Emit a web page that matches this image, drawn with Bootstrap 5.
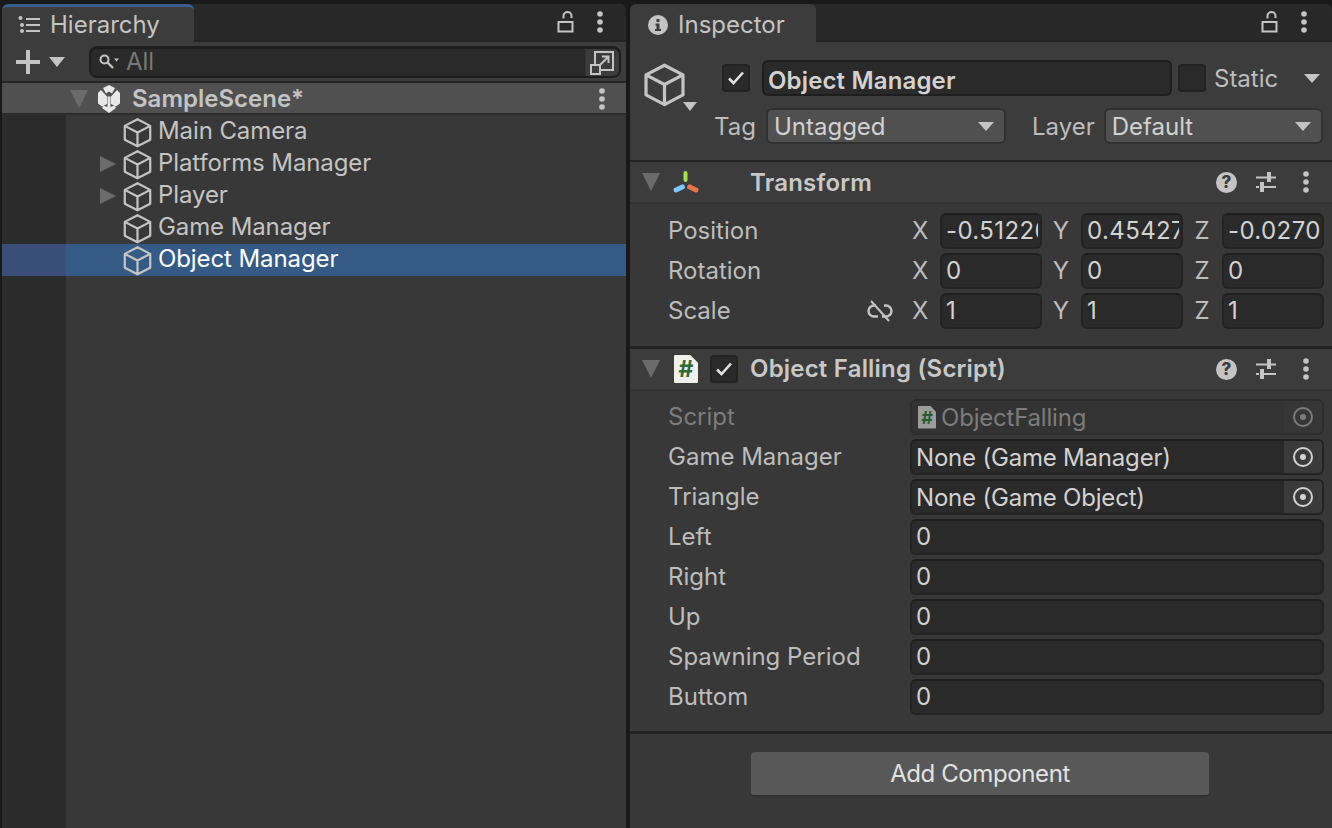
<!DOCTYPE html>
<html lang="en">
<head>
<meta charset="UTF-8">
<title>Unity Editor</title>
<link href="https://cdn.jsdelivr.net/npm/bootstrap@5.3.3/dist/css/bootstrap.min.css" rel="stylesheet">
<style>
    html, body { height: 100%; }
    body { margin: 0; background: #191919; color: #c4c4c4; font-family: Inter, "Liberation Sans", sans-serif; font-size: 24px; line-height: 32px; overflow: hidden; }
    svg { display: block; flex: none; }
    .ed-root { height: 828px; padding-top: 4px; gap: 4px; }
    .ed-panel { background: #383838; display: flex; flex-direction: column; overflow: hidden; border-radius: 6px 6px 0 0; }
    .ed-left { width: 624px; margin-left: 2px; }
    .ed-right { width: 702px; }
    .ed-tabs { height: 38px; background: #282828; border-bottom: 2px solid #232323; flex: none; }
    .ed-tab { height: 38px; background: #3c3c3c; color: #c4c4c4; margin-bottom: -2px; border-radius: 6px 6px 0 0; }
    .ed-tab-h { width: 192px; border-top: 3px solid #3a5f8f; padding-left: 16px; gap: 9px; }
    .ed-tab-i { width: 186px; padding: 3px 0 0 18px; gap: 10px; }
    .ed-tabtools { gap: 21px; padding-right: 22px; }
    .ed-toolbar { height: 41px; background: #3c3c3c; flex: none; padding-left: 14px; border-bottom: 2px solid #232323; }
    .ed-search { width: 532px; height: 32px; margin-left: 24px; background: #2a2a2a; border: 2px solid #1e1e1e; border-top-width: 3px; border-radius: 8px; color: #787878; }
    .ed-search-l { padding-left: 8px; gap: 7px; }
    .ed-search-btn { width: 34px; height: 100%; background: #3c3c3c; border-left: 1px solid #333; border-radius: 0 6px 6px 0; }
    .ed-scene { height: 32px; background: #505050; border-bottom: 2px solid #2c2c2c; flex: none; font-weight: 600; padding: 2px 20px 0 68px; }
    .ed-scene-name { flex: 1; }
    .ed-tree { flex: 1; background: linear-gradient(to right, #2b2b2b 64px, #383838 64px); padding-top: 1px; }
    .ed-row { height: 32px; padding-left: 56px; position: relative; }
    .ed-spacer { width: 64px; flex: none; }
    .ed-sel { background: linear-gradient(to right, #3a4f78 64px, #355a86 64px); color: #fff; }
    .ed-fold { position: absolute; left: 98px; top: 8px; width: 0; height: 0; border-left: 16px solid #6b6b6b; border-top: 8px solid transparent; border-bottom: 8px solid transparent; }
    .ed-rowname { margin: 0 0 2px 5px; letter-spacing: -.1px; }
    .ed-down { width: 0; height: 0; border-left: 8px solid transparent; border-right: 8px solid transparent; border-top: 9px solid #c4c4c4; flex: none; }
    .ed-down-g { border-left-width: 9px; border-right-width: 9px; border-top: 18px solid #6b6b6b; }
    .ed-head { height: 120px; background: #3c3c3c; border-bottom: 2px solid #232323; flex: none; position: relative; }
    .ed-check { width: 28px; height: 28px; background: #2a2a2a; border: 2px solid #222; border-radius: 4px; flex: none; }
    .ed-name { width: 410px; height: 36px; background: #2a2a2a; border: 2px solid #1e1e1e; border-radius: 6px; padding-left: 4px; font-weight: 600; color: #d2d2d2; margin-left: 12px; line-height: 37px; letter-spacing: .15px; }
    .ed-headtop { padding: 18px 0 0 92px; }
    .ed-select { height: 36px; background: #505050; border: 2px solid #303030; border-radius: 6px; padding: 0 10px 0 6px; color: #d2d2d2; }
    .ed-tagrow { padding-top: 12px; padding-left: 84px; }
    .ed-nudge { padding-top: 2px; }
    .ed-comp-h { height: 42px; background: #3c3c3c; border-bottom: 2px solid #333; flex: none; font-weight: 600; color: #c8c8c8; padding-left: 12px; padding-right: 22px; }
    .ed-comp-title { letter-spacing: .2px; }
    .ed-comp-tools { gap: 18px; margin-left: auto; }
    .ed-help { width: 21px; height: 21px; border-radius: 50%; background: #c4c4c4; color: #3c3c3c; font-size: 17px; font-weight: 800; line-height: 21px; text-align: center; flex: none; }
    .ed-kebab-r { margin-left: 7px; }
    .ed-sep { height: 3px; background: #232323; flex: none; }
    .ed-sep-a { margin-top: 15px; }
    .ed-sep-b { margin-top: 14px; }
    .ed-props { padding: 7px 8px 0 38px; }
    .ed-props-s { padding-top: 6px; }
    .ed-prop { height: 40px; }
    .ed-lab { width: 242px; flex: none; color: #bdbdbd; position: relative; }
    .ed-dim { color: #7c7c7c; }
    .ed-axis { width: 30px; flex: none; color: #bdbdbd; padding-left: 2px; }
    .ed-axis-n { width: 39px; text-align: center; padding: 0 1px 0 0; }
    .ed-field { height: 36px; background: #2a2a2a; border: 2px solid #232323; border-top-color: #1e1e1e; border-radius: 6px; padding: 0 0 0 4px; line-height: 31px; color: #d2d2d2; overflow: hidden; }
    .ed-num { width: 102px; flex: none; }
    .ed-num > span { display: block; width: 92px; overflow: hidden; white-space: nowrap; letter-spacing: .4px; }
    .ed-wide { width: 414px; flex: none; }
    .ed-tight { letter-spacing: -.2px; }
    .ed-picker { width: 38px; height: 100%; background: #3a3a3a; }
    .ed-ro { background: #333; color: #7c7c7c; border-color: #2c2c2c; }
    .ed-ro .ed-picker { background: #363636; }
    .ed-unlink { position: absolute; right: 17px; top: 5px; }
    .ed-btnbar { padding-top: 18px; }
    .ed-addbtn { width: 458px; height: 45px; background: #585858; border: 0; border-bottom: 2px solid #2f2f2f; border-radius: 4px; color: #e2e2e2; padding: 0; margin-left: 121px; font-size: 24px; letter-spacing: -.4px; }
    .ed-script-ico { width: 24px; height: 28px; background: #f0f0ec; color: #2f6b32; font-weight: 700; line-height: 28px; text-align: center; clip-path: polygon(0 0,68% 0,100% 28%,100% 100%,0 100%); font-size: 23px; flex: none; border-radius: 1px; }
    .ed-script-sm { width: 18px; height: 23px; background: #9c9c9c; color: #2b5a2e; font-size: 18px; line-height: 23px; margin: 0 5px 0 2px; }
</style>
</head>
<body>
<svg width="0" height="0" style="position:absolute">
    <symbol id="cube" viewBox="0 0 28 28"><path d="M14 2 25.500 8v12.500L14 26.500 2.500 20.500V8Z M2.500 8 14 14l11.500-6 M14 14v12.500" fill="none" stroke="currentColor" stroke-width="2" stroke-linejoin="round"/></symbol>
    <symbol id="kebab" viewBox="0 0 8 22"><circle cx="4" cy="3" r="2.800" fill="currentColor"/><circle cx="4" cy="11" r="2.800" fill="currentColor"/><circle cx="4" cy="19" r="2.800" fill="currentColor"/></symbol>
    <symbol id="lock" viewBox="0 0 18 22"><path d="M1.500 11h14v9.500h-14Z M6.500 7.500V5a4 4 0 0 1 8 0v2" fill="none" stroke="currentColor" stroke-width="2"/></symbol>
    <symbol id="sliders" viewBox="0 0 22 22"><path d="M1 6.500h20M1 16h3M8 16h13" fill="none" stroke="#c4c4c4" stroke-width="2"/><path d="M14 1v10M7 11v10" fill="none" stroke="#c4c4c4" stroke-width="4"/></symbol>
    <symbol id="target" viewBox="0 0 22 22"><circle cx="11" cy="11" r="9" fill="none" stroke="currentColor" stroke-width="2"/><circle cx="11" cy="11" r="3" fill="currentColor"/></symbol>
    <symbol id="check" viewBox="0 0 18 16"><path d="M2 8.500 6.500 13 16 2.500" fill="none" stroke="#e0e0e0" stroke-width="2.600"/></symbol>
</svg>

<div class="ed-root d-flex">
    <!-- Hierarchy -->
    <div class="ed-panel ed-left">
        <div class="ed-tabs d-flex justify-content-between">
            <div class="ed-tab ed-tab-h d-flex align-items-center">
                <svg width="23" height="18" viewBox="0 0 23 18"><path d="M8 3h14M8 9h14M8 15h14" stroke="#c4c4c4" stroke-width="2"/><circle cx="2.500" cy="2" r="2" fill="#c4c4c4"/><circle cx="4" cy="9" r="2" fill="#c4c4c4"/><circle cx="4" cy="15" r="2" fill="#c4c4c4"/></svg>
                <span>Hierarchy</span>
            </div>
            <div class="ed-tabtools d-flex align-items-center">
                <svg width="18" height="22"><use href="#lock" color="#c4c4c4"/></svg>
                <svg width="8" height="22"><use href="#kebab" color="#c4c4c4"/></svg>
            </div>
        </div>
        <div class="ed-toolbar d-flex align-items-center">
            <svg width="24" height="24" viewBox="0 0 24 24"><path d="M12 0v24M0 12h24" stroke="#c4c4c4" stroke-width="4"/></svg>
            <div class="ed-down" style="margin-left:9px;border-top-width:10px"></div>
            <div class="ed-search d-flex align-items-center justify-content-between">
                <div class="ed-search-l d-flex align-items-center">
                    <svg width="20" height="16" viewBox="0 0 20 16"><circle cx="5.500" cy="5.500" r="4" fill="none" stroke="#c4c4c4" stroke-width="2"/><path d="M8.500 8.500 14 14" stroke="#c4c4c4" stroke-width="2.400"/><path d="M15 4.500h5l-2.500 3Z" fill="#c4c4c4"/></svg>
                    <span>All</span>
                </div>
                <div class="ed-search-btn d-flex align-items-center justify-content-center">
                    <svg width="25" height="25" viewBox="0 0 25 25"><path d="M5 15V2h18v18H11" fill="none" stroke="#c4c4c4" stroke-width="2"/><path d="M10 15 18 7M12 6.500h6.500V13" fill="none" stroke="#c4c4c4" stroke-width="2"/><path d="M1 15h9v9H1Z" fill="none" stroke="#c4c4c4" stroke-width="2"/></svg>
                </div>
            </div>
        </div>
        <div class="ed-scene d-flex align-items-center">
            <div class="ed-down ed-down-g"></div>
            <svg class="ms-2" width="26" height="28" viewBox="0 0 26 28" style="margin-right:10px">
                <path d="M13 0l6 3-3 5.500-3-2-3 2L7 3ZM5 5l6 6.500V19l-5 2.500-4-3V8ZM21 5l-6 6.500V19l5 2.500 4-3V8ZM11.500 11.500h3V22l4-1.500 1.500 2.500-7 5-7-5 1.500-2.500 4 1.500Z" fill="#e8e8e8"/>
            </svg>
            <span class="ed-scene-name">SampleScene*</span>
            <svg width="8" height="22"><use href="#kebab" color="#c4c4c4"/></svg>
        </div>
        <div class="ed-tree">
            <div class="ed-row d-flex align-items-center"><span class="ed-spacer"></span><svg width="31" height="31"><use href="#cube" color="#c4c4c4"/></svg><span class="ed-rowname">Main Camera</span></div>
            <div class="ed-row d-flex align-items-center"><span class="ed-fold"></span><span class="ed-spacer"></span><svg width="31" height="31"><use href="#cube" color="#c4c4c4"/></svg><span class="ed-rowname">Platforms Manager</span></div>
            <div class="ed-row d-flex align-items-center"><span class="ed-fold"></span><span class="ed-spacer"></span><svg width="31" height="31"><use href="#cube" color="#c4c4c4"/></svg><span class="ed-rowname">Player</span></div>
            <div class="ed-row d-flex align-items-center"><span class="ed-spacer"></span><svg width="31" height="31"><use href="#cube" color="#c4c4c4"/></svg><span class="ed-rowname">Game Manager</span></div>
            <div class="ed-row ed-sel d-flex align-items-center"><span class="ed-spacer"></span><svg width="31" height="31"><use href="#cube" color="#c4c4c4"/></svg><span class="ed-rowname">Object Manager</span></div>
        </div>
    </div>

    <!-- Inspector -->
    <div class="ed-panel ed-right">
        <div class="ed-tabs d-flex justify-content-between">
            <div class="ed-tab ed-tab-i d-flex align-items-center">
                <svg width="20" height="20" viewBox="0 0 20 20"><circle cx="10" cy="10" r="10" fill="#c4c4c4"/><path d="M8.500 4h3v3h-3ZM7.500 8.500h4V14h1.500v2H7v-2h1.500v-3.500h-1Z" fill="#3c3c3c"/></svg>
                <span>Inspector</span>
            </div>
            <div class="ed-tabtools d-flex align-items-center" style="padding-right:24px">
                <svg width="18" height="22"><use href="#lock" color="#c4c4c4"/></svg>
                <svg width="8" height="22"><use href="#kebab" color="#c4c4c4"/></svg>
            </div>
        </div>
        <div class="ed-head">
            <svg class="position-absolute" style="left:12px;top:20px" width="45" height="45"><use href="#cube" color="#c4c4c4"/></svg>
            <div class="ed-down position-absolute" style="left:53px;top:60px;border-left-width:7px;border-right-width:7px"></div>
            <div class="ed-headtop d-flex align-items-center">
                <div class="ed-check d-flex align-items-center justify-content-center">
                    <svg width="18" height="16"><use href="#check"/></svg>
                </div>
                <div class="ed-name">Object Manager</div>
                <div class="ed-check" style="margin-left:6px"></div>
                <span class="ed-nudge" style="margin-left:8px;color:#bdbdbd">Static</span>
                <div class="ed-down" style="margin-left:26px"></div>
            </div>
            <div class="ed-tagrow d-flex align-items-center">
                <span class="ed-nudge" style="color:#bdbdbd">Tag</span>
                <div class="ed-select d-flex align-items-center justify-content-between" style="width:240px;margin-left:10px"><span class="ed-nudge">Untagged</span><div class="ed-down"></div></div>
                <span class="ed-nudge" style="color:#bdbdbd;margin-left:26px">Layer</span>
                <div class="ed-select d-flex align-items-center justify-content-between" style="width:219px;margin-left:9px"><span class="ed-nudge">Default</span><div class="ed-down"></div></div>
            </div>
        </div>

        <div class="ed-comp-h d-flex align-items-center">
            <div class="ed-down ed-down-g"></div>
            <svg style="margin-left:12px" width="28" height="24" viewBox="0 0 28 24"><rect x="11.500" y="1" width="4" height="11" rx="2" fill="#a4e04e"/><rect x="1" y="16" width="12" height="5" rx="2.500" transform="rotate(-25 7 18)" fill="#7fc8f8"/><rect x="15" y="16" width="12" height="5" rx="2.500" transform="rotate(25 21 18)" fill="#e8744a"/></svg>
            <span class="ed-comp-title ed-nudge" style="margin-left:50px">Transform</span>
            <div class="ed-comp-tools d-flex align-items-center">
                <div class="ed-help">?</div>
                <svg width="22" height="22"><use href="#sliders"/></svg>
                <svg class="ed-kebab-r" width="8" height="22"><use href="#kebab" color="#c4c4c4"/></svg>
            </div>
        </div>
        <div class="ed-props">
            <div class="ed-prop d-flex align-items-center"><div class="ed-lab">Position</div><div class="ed-axis">X</div><div class="ed-field ed-num"><span>-0.51226</span></div><div class="ed-axis ed-axis-n">Y</div><div class="ed-field ed-num"><span>0.45427</span></div><div class="ed-axis ed-axis-n">Z</div><div class="ed-field ed-num"><span>-0.0270</span></div></div>
            <div class="ed-prop d-flex align-items-center"><div class="ed-lab">Rotation</div><div class="ed-axis">X</div><div class="ed-field ed-num"><span>0</span></div><div class="ed-axis ed-axis-n">Y</div><div class="ed-field ed-num"><span>0</span></div><div class="ed-axis ed-axis-n">Z</div><div class="ed-field ed-num"><span>0</span></div></div>
            <div class="ed-prop d-flex align-items-center"><div class="ed-lab">Scale
                <svg class="ed-unlink" width="26" height="22" viewBox="0 0 26 22"><path d="M9 5.500H7a5.500 5.500 0 0 0 0 11h4M17 5.500h2a5.500 5.500 0 0 1 0 11h-4" fill="none" stroke="#c4c4c4" stroke-width="2.400"/><path d="M4 1l18 20" stroke="#c4c4c4" stroke-width="2"/></svg>
            </div><div class="ed-axis">X</div><div class="ed-field ed-num"><span>1</span></div><div class="ed-axis ed-axis-n">Y</div><div class="ed-field ed-num"><span>1</span></div><div class="ed-axis ed-axis-n">Z</div><div class="ed-field ed-num"><span>1</span></div></div>
        </div>
        <div class="ed-sep ed-sep-a"></div>

        <div class="ed-comp-h d-flex align-items-center">
            <div class="ed-down ed-down-g"></div>
            <div class="ed-script-ico" style="margin-left:14px">#</div>
            <div class="ed-check d-flex align-items-center justify-content-center" style="margin-left:12px">
                <svg width="18" height="16"><use href="#check"/></svg>
            </div>
            <span class="ed-comp-title" style="margin-left:12px">Object Falling (Script)</span>
            <div class="ed-comp-tools d-flex align-items-center">
                <div class="ed-help">?</div>
                <svg width="22" height="22"><use href="#sliders"/></svg>
                <svg class="ed-kebab-r" width="8" height="22"><use href="#kebab" color="#c4c4c4"/></svg>
            </div>
        </div>
        <div class="ed-props ed-props-s">
            <div class="ed-prop d-flex align-items-center"><div class="ed-lab ed-dim">Script</div><div class="ed-field ed-wide ed-ro d-flex align-items-center justify-content-between"><div class="d-flex align-items-center"><div class="ed-script-ico ed-script-sm">#</div><span class="ed-tight">ObjectFalling</span></div><div class="ed-picker d-flex align-items-center justify-content-center"><svg width="22" height="22"><use href="#target" color="#7c7c7c"/></svg></div></div></div>
            <div class="ed-prop d-flex align-items-center"><div class="ed-lab">Game Manager</div><div class="ed-field ed-wide d-flex align-items-center justify-content-between"><span class="ed-tight">None (Game Manager)</span><div class="ed-picker d-flex align-items-center justify-content-center"><svg width="22" height="22"><use href="#target" color="#d2d2d2"/></svg></div></div></div>
            <div class="ed-prop d-flex align-items-center"><div class="ed-lab">Triangle</div><div class="ed-field ed-wide d-flex align-items-center justify-content-between"><span class="ed-tight">None (Game Object)</span><div class="ed-picker d-flex align-items-center justify-content-center"><svg width="22" height="22"><use href="#target" color="#d2d2d2"/></svg></div></div></div>
            <div class="ed-prop d-flex align-items-center"><div class="ed-lab">Left</div><div class="ed-field ed-wide">0</div></div>
            <div class="ed-prop d-flex align-items-center"><div class="ed-lab">Right</div><div class="ed-field ed-wide">0</div></div>
            <div class="ed-prop d-flex align-items-center"><div class="ed-lab">Up</div><div class="ed-field ed-wide">0</div></div>
            <div class="ed-prop d-flex align-items-center"><div class="ed-lab">Spawning Period</div><div class="ed-field ed-wide">0</div></div>
            <div class="ed-prop d-flex align-items-center"><div class="ed-lab">Buttom</div><div class="ed-field ed-wide">0</div></div>
        </div>
        <div class="ed-sep ed-sep-b"></div>
        <div class="ed-btnbar">
            <button type="button" class="btn ed-addbtn">Add Component</button>
        </div>
    </div>
</div>
<script src="https://cdn.jsdelivr.net/npm/bootstrap@5.3.3/dist/js/bootstrap.bundle.min.js"></script>
</body>
</html>
